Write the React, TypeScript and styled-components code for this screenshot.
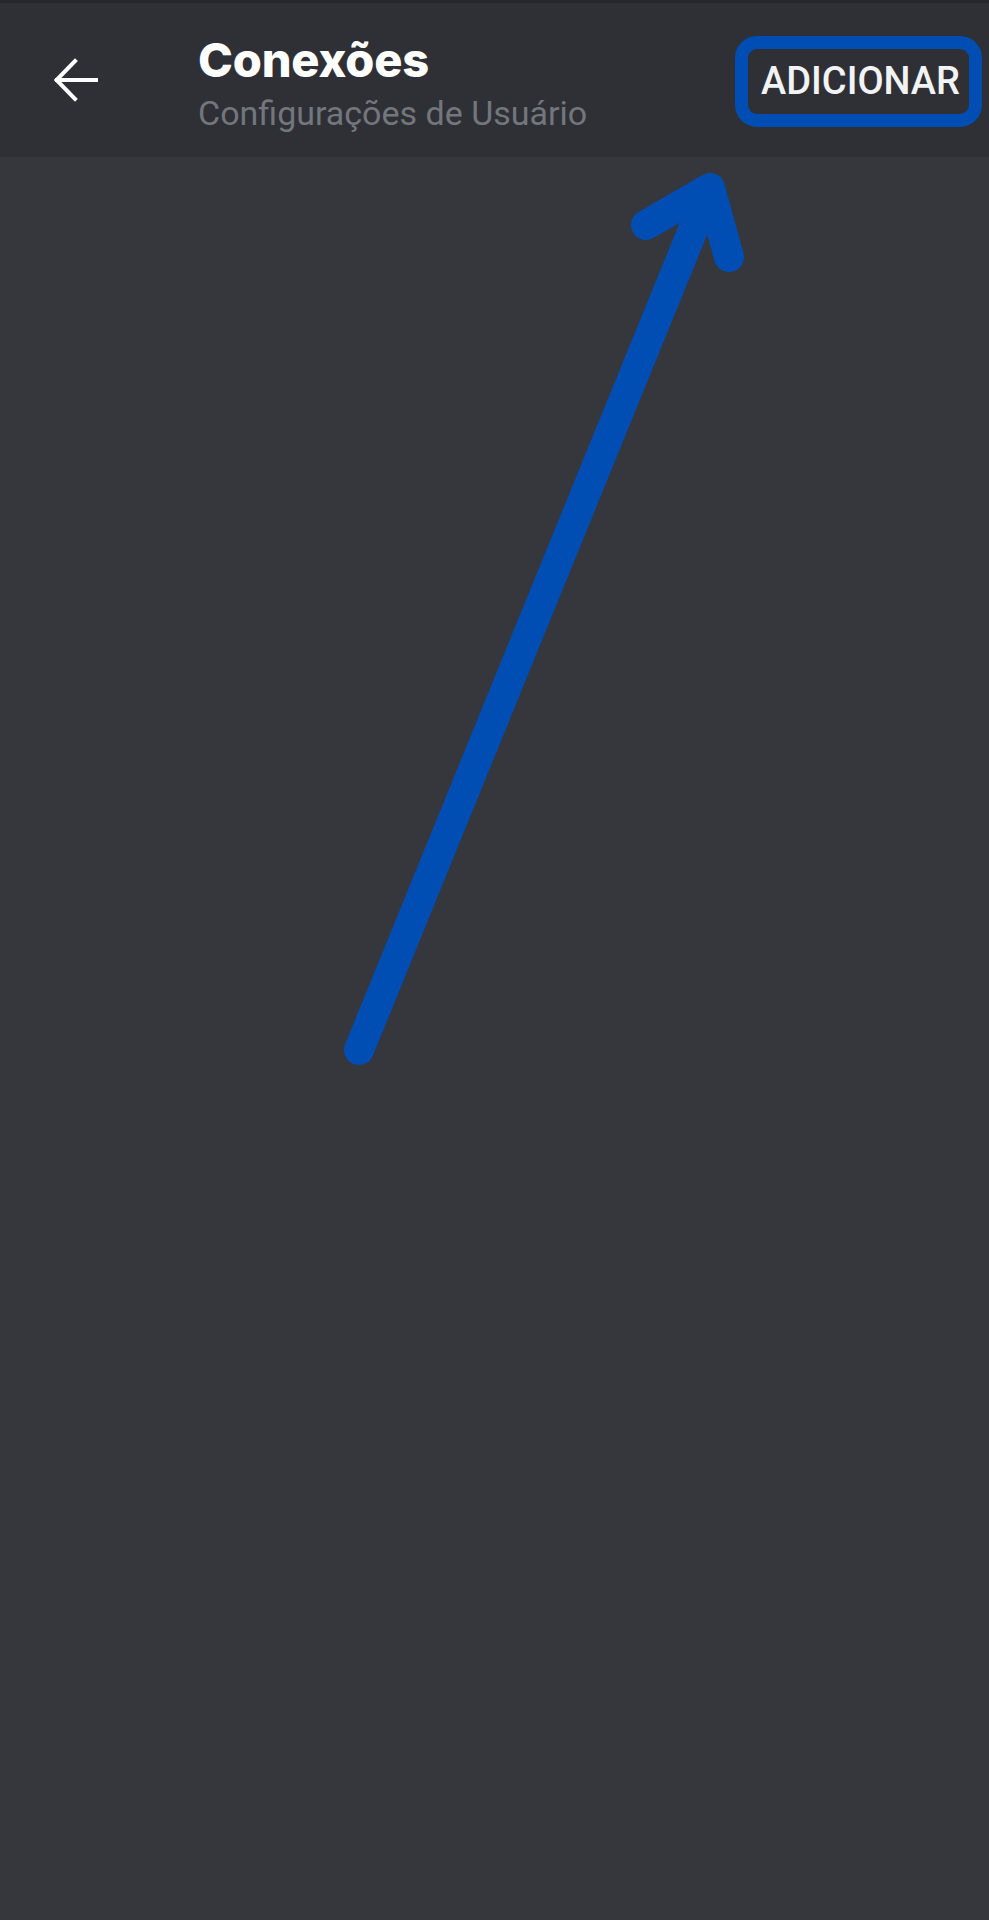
import React from "react";
import styled, { createGlobalStyle } from "styled-components";

const Global = createGlobalStyle`
  html, body { margin: 0; padding: 0; background: #36373d; }
  #root { min-height: 1920px; }
`;

const Page = styled.div`
  position: relative;
  width: 989px;
  min-height: 1920px;
  background: #36373d;
  display: flex;
  flex-direction: column;
  overflow: hidden;
`;

const StatusEdge = styled.div`
  height: 3px;
  background: #26272b;
`;

const Header = styled.header`
  height: 154px;
  background: #2f3035;
  display: flex;
  align-items: center;
  padding: 0 7px 0 54px;
  box-sizing: border-box;
`;

const BackButton = styled.button`
  width: 44px;
  height: 44px;
  padding: 0;
  border: 0;
  background: transparent;
  display: flex;
  align-items: center;
  justify-content: center;
  margin-right: 100px;
  margin-top: -1px;
`;

const TitleBlock = styled.div`
  flex: 1;
  display: flex;
  flex-direction: column;
  margin-top: 9px;
`;

const Title = styled.h1`
  margin: 0;
  font-family: Inter, "Noto Sans", sans-serif;
  font-weight: 800;
  font-size: 47px;
  line-height: 52px;
  color: #ffffff;
  letter-spacing: -0.2px;
`;

const Subtitle = styled.div`
  margin-top: 5px;
  font-family: Roboto, "Liberation Sans", sans-serif;
  font-size: 34px;
  line-height: 44px;
  color: #72767d;
`;

const AddButton = styled.button`
  height: 91px;
  padding: 0 9px 0 13px;
  border: 13px solid #004db3;
  border-radius: 22px;
  background: transparent;
  box-sizing: border-box;
  font-family: Roboto, "Liberation Sans", sans-serif;
  font-weight: 500;
  font-size: 38px;
  color: #f2f3f5;
  letter-spacing: 0;
  margin-top: 2px;
`;

const Annotation = styled.svg`
  position: absolute;
  left: 0;
  top: 0;
  pointer-events: none;
`;

export default function App() {
  return (
    <>
      <Global />
      <Page>
        <StatusEdge />
        <Header>
          <BackButton aria-label="Voltar">
            <svg width="44" height="44" viewBox="0 0 44 44" fill="none">
              <path
                d="M43 22H3M21 3L2.5 22L21 41"
                stroke="#ffffff"
                strokeWidth="4"
                strokeLinecap="square"
                strokeLinejoin="miter"
              />
            </svg>
          </BackButton>
          <TitleBlock>
            <Title>Conexões</Title>
            <Subtitle>Configurações de Usuário</Subtitle>
          </TitleBlock>
          <AddButton>ADICIONAR</AddButton>
        </Header>
        <Annotation width="989" height="1920" viewBox="0 0 989 1920">
          <path
            d="M359 1050L710 188M646 225L710 188L729 257"
            stroke="#004db3"
            strokeWidth="30"
            strokeLinecap="round"
            strokeLinejoin="round"
            fill="none"
          />
        </Annotation>
      </Page>
    </>
  );
}
